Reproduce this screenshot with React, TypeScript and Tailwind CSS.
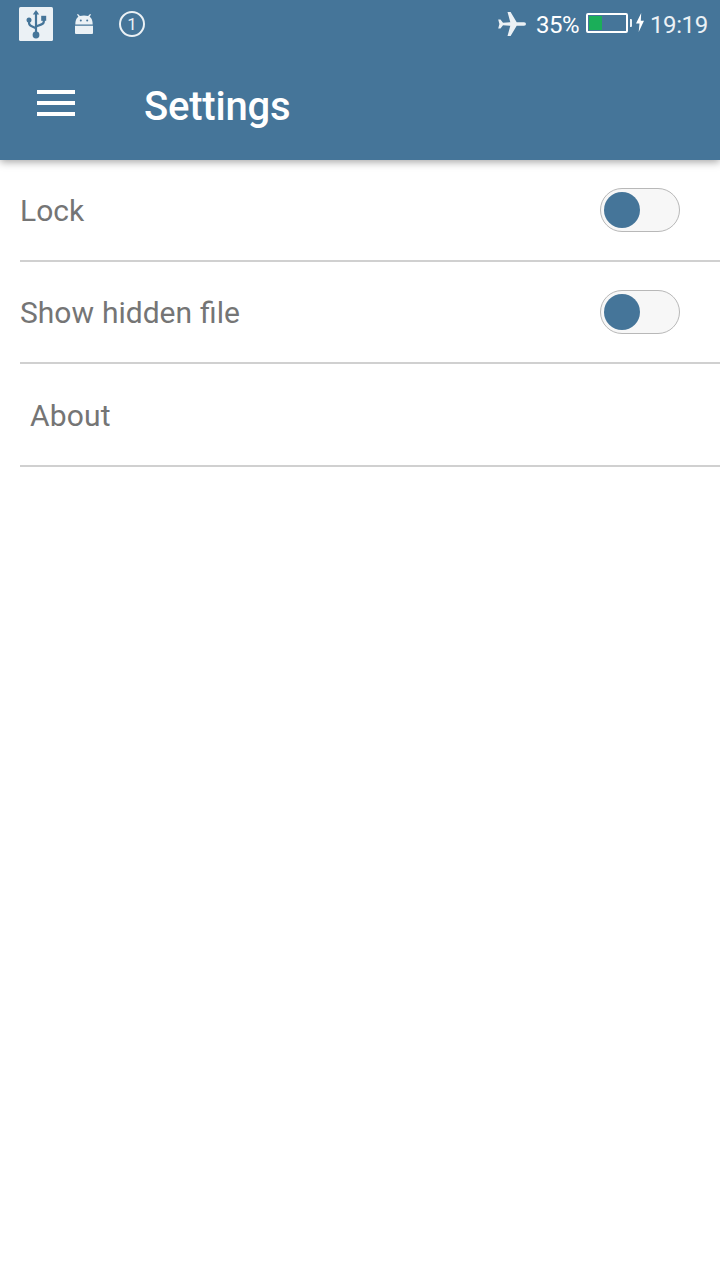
import { useState } from "react";

function UsbIcon() {
  return (
    <svg className="ml-[19px] h-[34px] w-[34px] shrink-0" viewBox="0 0 34 34">
      <rect width="34" height="34" rx="1.5" fill="#ebf1f5" />
      <g fill="none" stroke="#457599" strokeWidth="2.2">
        <path d="M17 5V28" />
        <path d="M10 12V15.5Q10 18 12.2 19L17 21.3" />
        <path d="M24.8 11V14.5Q24.8 16.6 22.5 17.4L17 19.6" />
      </g>
      <g fill="#457599">
        <path d="M17 3L20.2 7.6H13.8Z" />
        <circle cx="10" cy="13" r="2.5" />
        <rect x="22.2" y="8.8" width="5" height="5" />
        <circle cx="17" cy="28" r="3.4" />
      </g>
    </svg>
  );
}

function AndroidIcon() {
  return (
    <svg className="ml-[22px] h-[20px] w-[18px] shrink-0" viewBox="0 0 18 20">
      <path d="M0.3 10.5C0.3 7 1.2 4.2 3.4 2.8L2 .6L3 0L4.9 2Q9 .9 13.1 2L15 0L16 .6L14.6 2.8C16.8 4.2 17.7 7 17.7 10.5Z" fill="#ebf1f5" />
      <path d="M0 11.7H18V19Q18 20 17 20H1Q0 20 0 19Z" fill="#ebf1f5" />
      <circle cx="5.8" cy="6.5" r="1" fill="#457599" />
      <circle cx="12.2" cy="6.5" r="1" fill="#457599" />
    </svg>
  );
}

function PlaneIcon() {
  return (
    <svg className="h-[24px] w-[28px] shrink-0" viewBox="0 0 28 24">
      <path d="M28 12Q28 13.8 26 13.8H18.7L12.6 24H9.5L12.3 13.8L5 13.3L2.5 16.5H.2L1.4 12L.2 7.5H2.5L5 10.7L12.3 10.2L9.5 0H12.6L18.7 10.2H26Q28 10.2 28 12Z" fill="#ebf1f5" />
    </svg>
  );
}

function Battery() {
  return (
    <div className="ml-[7px] flex shrink-0 items-center">
      <div className="mt-[-2px] h-[20px] w-[42px] rounded-[2px] border-2 border-white p-px">
        <div className="h-full w-[13px] bg-[#1bae59]" />
      </div>
      <div className="mt-[-2px] ml-[2px] h-[8px] w-[2px] rounded-r-[1px] bg-[#ebf1f5]" />
      <svg className="mt-[-3px] ml-[4px] h-[19px] w-[8px]" viewBox="0 0 8 19">
        <path d="M5.2 0L0 10.5H3.5L2.7 19L8 7.8H4.8Z" fill="#fff" />
      </svg>
    </div>
  );
}

function StatusBar() {
  return (
    <div className="flex h-12 items-center text-[24px] leading-[28px] text-[#ebf1f5]">
      <UsbIcon />
      <AndroidIcon />
      <div className="ml-[26px] flex h-[26px] w-[26px] items-center justify-center rounded-full border-2 border-[#ebf1f5] text-[17px] leading-none">
        1
      </div>
      <div className="ml-auto flex items-center pr-3">
        <PlaneIcon />
        <span className="mt-[2px] ml-[10px] w-[43px] tracking-[-0.5px] text-white">35%</span>
        <Battery />
        <span className="mt-[2px] ml-[6px] w-[58px] tracking-[-0.4px] whitespace-nowrap">19:19</span>
      </div>
    </div>
  );
}

function Toggle({ label }: { label: string }) {
  const [on, setOn] = useState(false);
  return (
    <button
      role="switch"
      aria-checked={on}
      aria-label={label}
      onClick={() => setOn(!on)}
      className={`mr-10 flex h-[44px] w-[80px] items-center rounded-full border border-[#b8b8b8] bg-[#f7f7f7] px-[3px] ${on ? "justify-end" : "justify-start"}`}
    >
      <span className="h-[36px] w-[36px] rounded-full bg-[#457599]" />
    </button>
  );
}

export default function App() {
  return (
    <div className="flex h-[1280px] w-[720px] flex-col bg-white font-['Roboto',sans-serif]">
      <header className="h-[160px] shrink-0 bg-[#457599] shadow-[0_2px_8px_rgba(0,0,0,0.36)]">
        <StatusBar />
        <div className="flex h-[112px] items-center">
          <button aria-label="Menu" className="mt-[-2px] ml-[37px] flex w-[38px] flex-col gap-[7px]">
            <span className="h-[4px] bg-white" />
            <span className="h-[4px] bg-white" />
            <span className="h-[4px] bg-white" />
          </button>
          <h1 className="mt-[6px] ml-[69px] text-[40px] leading-[48px] font-medium tracking-[-0.2px] text-white">Settings</h1>
        </div>
      </header>
      <main className="ml-5 text-[30px] leading-[36px] text-[#757575]">
        <div className="flex h-[102px] items-center justify-between border-b-2 border-[#d0d0d0]">
          <span className="mt-[2px]">Lock</span>
          <Toggle label="Lock" />
        </div>
        <div className="flex h-[102px] items-center justify-between border-b-2 border-[#d0d0d0]">
          <span className="mt-[2px] [word-spacing:0.5px]">Show hidden file</span>
          <Toggle label="Show hidden file" />
        </div>
        <div className="flex h-[103px] items-center border-b-2 border-[#d0d0d0] pl-[10px]">
          <span className="mt-[2px] tracking-[0.15px]">About</span>
        </div>
      </main>
    </div>
  );
}
